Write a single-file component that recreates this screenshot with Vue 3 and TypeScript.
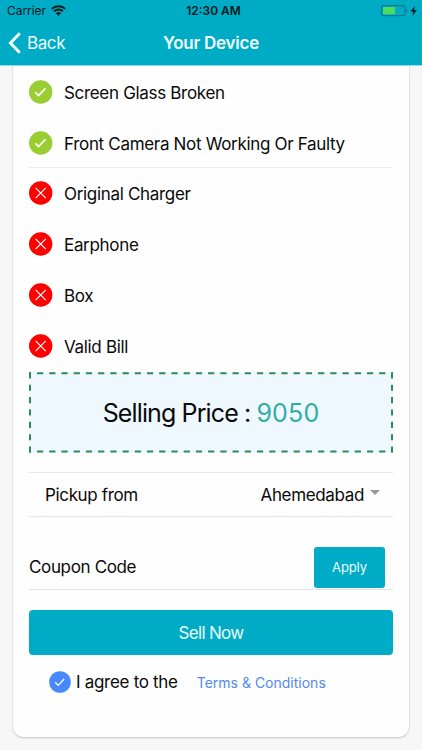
<script setup lang="ts">
interface Check {
  label: string
  ok: boolean
}

const faults: Check[] = [
  { label: 'Screen Glass Broken', ok: true },
  { label: 'Front Camera Not Working Or Faulty', ok: true },
]
const accessories: Check[] = [
  { label: 'Original Charger', ok: false },
  { label: 'Earphone', ok: false },
  { label: 'Box', ok: false },
  { label: 'Valid Bill', ok: false },
]
const groups: Check[][] = [faults, accessories]
const price = 9050
</script>

<template>
  <div class="screen">
    <header class="header">
      <div class="status">
        <div class="side">
          <span class="carrier">Carrier</span>
          <svg class="wifi" width="15" height="11" viewBox="0 0 15 11">
            <path d="M.8 3.9a9.6 9.6 0 0 1 13.4 0" />
            <path d="M3.1 6.3a6.3 6.3 0 0 1 8.8 0" />
            <path class="solid" d="M4.9 8.2a3.8 3.8 0 0 1 5.2 0L7.5 10.8z" />
          </svg>
        </div>
        <span class="clock">12:30 AM</span>
        <div class="side end">
          <svg width="38" height="12" viewBox="0 0 38 12">
            <rect class="shell" x=".6" y=".6" width="23.3" height="10" rx="2.2" />
            <rect class="charge" x="2" y="2" width="12.2" height="7.2" rx=".6" />
            <path class="nub" d="M25.2 3.8v3.6c1.7-.7 1.7-2.9 0-3.6z" />
            <path class="bolt" d="M34.2.7 29.5 6.5h2.9L31.2 11.1l4.7-6.2h-3z" />
          </svg>
        </div>
      </div>
      <nav class="nav">
        <a class="back">
          <svg width="13" height="22" viewBox="0 0 13 22">
            <path d="M11.8 1.2 2.4 11l9.4 9.8" />
          </svg>
          <span>Back</span>
        </a>
        <span class="title">Your Device</span>
        <span class="balance"></span>
      </nav>
    </header>

    <main class="card">
      <ul v-for="(group, g) in groups" :key="g" class="group">
        <li v-for="item in group" :key="item.label" class="row">
          <svg class="mark" :class="{ bad: !item.ok }" width="24" height="24" viewBox="0 0 24 24">
            <circle cx="11.7" cy="12" r="11.7" />
            <path v-if="item.ok" class="tick" d="m6.3 12.3 3.2 3.3 7-7.2" />
            <path v-else d="m6.6 6.9 10.2 10.2M16.8 6.9 6.6 17.1" />
          </svg>
          <span>{{ item.label }}</span>
        </li>
      </ul>

      <section class="price">
        <svg class="dashes" width="364" height="81" viewBox="0 0 364 81">
          <path class="h" d="M0 1.2H364M0 79.6H364" />
          <path class="v" d="M1 .3V80.6M363 .3V80.6" />
        </svg>
        <span>Selling Price : <b>{{ price }}</b></span>
      </section>

      <section class="pickup">
        <span class="from">Pickup from</span>
        <span class="city">Ahemedabad</span>
        <i class="caret"></i>
      </section>

      <section class="coupon">
        <span class="code">Coupon Code</span>
        <button class="apply"><span>Apply</span></button>
      </section>

      <button class="sell"><span>Sell Now</span></button>

      <section class="agree">
        <svg width="22" height="22" viewBox="0 0 22 22">
          <circle cx="11" cy="11" r="10.8" />
          <path d="m6.2 11.3 3 3.1 6-6.4" />
        </svg>
        <span class="text">I agree to the</span>
        <a class="terms">Terms &amp; Conditions</a>
      </section>
    </main>
  </div>
</template>

<style>
body {
  margin: 0;
  background: #f7f7f7;
}
</style>

<style scoped>
.screen {
  box-sizing: border-box;
  width: 422px;
  height: 750px;
  overflow: hidden;
  background: #f7f7f7;
  font-family: Inter, 'Liberation Sans', sans-serif;
  color: #0a0a0a;
}
svg {
  display: block;
  flex: none;
  fill: none;
}
span,
a {
  white-space: nowrap;
}
.header {
  height: 65px;
  background: #00acc5;
  border-bottom: 1px solid #8edbe5;
}
.status {
  display: flex;
  align-items: center;
  height: 21px;
  color: #06191c;
}
.side {
  display: flex;
  align-items: center;
  flex: 1;
  padding-left: 7px;
}
.end {
  justify-content: flex-end;
  padding: 0 3px 0 0;
}
.carrier {
  font-size: 12px;
  letter-spacing: -0.05px;
}
.wifi {
  margin-left: 5px;
  stroke: #06191c;
  stroke-width: 1.9;
}
.wifi .solid {
  fill: #06191c;
  stroke: none;
}
.clock {
  margin-left: 1px;
  font-size: 12px;
  font-weight: 600;
}
.shell {
  stroke: #067b8c;
  stroke-width: 1.1;
}
.charge {
  fill: #4cd964;
}
.nub {
  fill: #067b8c;
}
.bolt {
  fill: #06191c;
}
.nav {
  display: flex;
  align-items: center;
  height: 43px;
  color: #f0fcfe;
}
.back,
.balance {
  flex: 1;
}
.back {
  display: flex;
  align-items: center;
  gap: 6px;
  padding-left: 8px;
  font-size: 17px;
  letter-spacing: -0.4px;
}
.balance {
  padding-left: 8px;
}
.back path {
  stroke: #f0fcfe;
  stroke-width: 3;
}
.title {
  font-size: 17px;
  font-weight: 600;
  letter-spacing: -0.25px;
}
.card {
  box-sizing: border-box;
  width: 398px;
  height: 672px;
  margin-left: 12px;
  padding: 0.5px 16px 0;
  background: #fefefe;
  border: 1px solid #e3e3e3;
  border-top: 0;
  border-bottom-color: #d2d2d2;
  border-radius: 0 0 12px 12px;
  box-shadow: 0 1px 1px #e6e6e6;
}
.group {
  margin: 0;
  padding: 0;
  list-style: none;
}
.group + .group {
  margin-top: -1px;
  border-top: 1px solid #ececec;
}
.row {
  display: flex;
  align-items: center;
  gap: 11px;
  height: 50.8px;
  font-size: 17px;
  letter-spacing: -0.32px;
}
.row span {
  padding-top: 2px;
}
.mark circle {
  fill: #9acd32;
}
.mark.bad circle {
  fill: #fe0000;
}
.mark path {
  stroke: #fff;
  stroke-width: 1.2;
}
.mark .tick {
  stroke-width: 1.6;
}
.price {
  display: grid;
  place-items: center;
  height: 81px;
  margin-top: 0.5px;
  background: #f0f8ff;
  font-size: 25px;
  letter-spacing: -0.88px;
}
.price > * {
  grid-area: 1 / 1;
}
.price span {
  padding-top: 1px;
}
.price b {
  font-weight: 400;
  letter-spacing: 0.15px;
  color: #2fada6;
}
.dashes path {
  stroke: #2e8b57;
  stroke-width: 2;
}
.dashes .h {
  stroke-dasharray: 6.2 6.02;
  stroke-dashoffset: 4.2;
}
.dashes .v {
  stroke-dasharray: 6.1 6.27;
}
.pickup {
  box-sizing: border-box;
  display: flex;
  align-items: center;
  height: 45px;
  margin-top: 19px;
  padding: 0 13px 0 16px;
  border-top: 1px solid #e6e6e6;
  border-bottom: 1px solid #e6e6e6;
  font-size: 17px;
  letter-spacing: -0.35px;
}
.pickup span {
  padding-top: 2px;
}
.city {
  margin-left: auto;
}
.caret {
  margin: -3px 0 0 6px;
  border: 5px solid transparent;
  border-top: 5.5px solid #999;
  border-bottom: 0;
}
.coupon {
  box-sizing: border-box;
  display: flex;
  align-items: flex-end;
  justify-content: space-between;
  height: 73px;
  padding: 0 8px 1px 0;
  border-bottom: 1px solid #e2e2e6;
}
.code {
  padding-bottom: 11px;
  font-size: 17px;
  letter-spacing: -0.35px;
}
button {
  padding: 0;
  border: 0;
  border-radius: 4px;
  background: #00acc5;
  color: #ecfbfd;
  font-family: inherit;
}
.apply {
  width: 71px;
  height: 41px;
  border-radius: 3px;
  font-size: 13px;
  letter-spacing: -0.1px;
}
.sell {
  display: block;
  width: 364px;
  height: 45px;
  margin-top: 20px;
  padding-top: 2px;
  font-size: 17px;
  letter-spacing: -0.7px;
}
.agree {
  display: flex;
  align-items: center;
  height: 54px;
  padding-left: 20px;
}
.agree circle {
  fill: #4789fb;
}
.agree path {
  stroke: #fff;
  stroke-width: 1.3;
}
.text {
  margin-left: 5px;
  font-size: 17px;
  letter-spacing: -0.3px;
}
.terms {
  margin: 1px 0 0 19px;
  color: #5289ec;
  font-size: 14px;
}
</style>
